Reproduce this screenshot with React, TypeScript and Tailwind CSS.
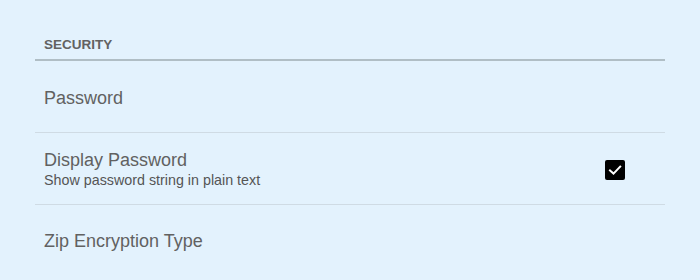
export default function App() {
  return (
    <div
      className="min-h-[280px] w-full bg-[#e3f2fd] px-[35px]"
      style={{ fontFamily: '"Liberation Sans", Arial, sans-serif' }}
    >
      {/* Section header */}
      <div className="border-b-2 border-[#b0bec5] pl-[9px] pt-[36px] pb-[6px]">
        <div className="text-[13.5px] leading-[17px] font-semibold uppercase text-[#626262]">Security</div>
      </div>

      {/* Password */}
      <div className="border-b border-[#cfdbe4] pl-[9px] pt-[27px] pb-[24px]">
        <div className="text-[18px] leading-[20px] text-[#616161]">Password</div>
      </div>

      {/* Display Password */}
      <div className="flex items-center justify-between border-b border-[#cfdbe4] pl-[9px] pr-[40px] pt-[17px] pb-[15px]">
        <div>
          <div className="text-[18px] leading-[20px] text-[#616161]">Display Password</div>
          <div className="mt-[1px] text-[14.3px] leading-[18px] text-[#555]">Show password string in plain text</div>
        </div>
        <div className="flex h-[20px] w-[20px] items-center justify-center rounded-[2px] bg-black">
          <svg width="16" height="16" viewBox="0 0 16 16" fill="none">
            <path d="M3 8.4 L6.5 11.6 L13.2 4.6" stroke="white" strokeWidth="2" strokeLinecap="square" />
          </svg>
        </div>
      </div>

      {/* Zip Encryption Type */}
      <div className="pl-[9px] pt-[26px] pb-[24px]">
        <div className="text-[18px] leading-[20px] text-[#616161]">Zip Encryption Type</div>
      </div>
    </div>
  );
}
